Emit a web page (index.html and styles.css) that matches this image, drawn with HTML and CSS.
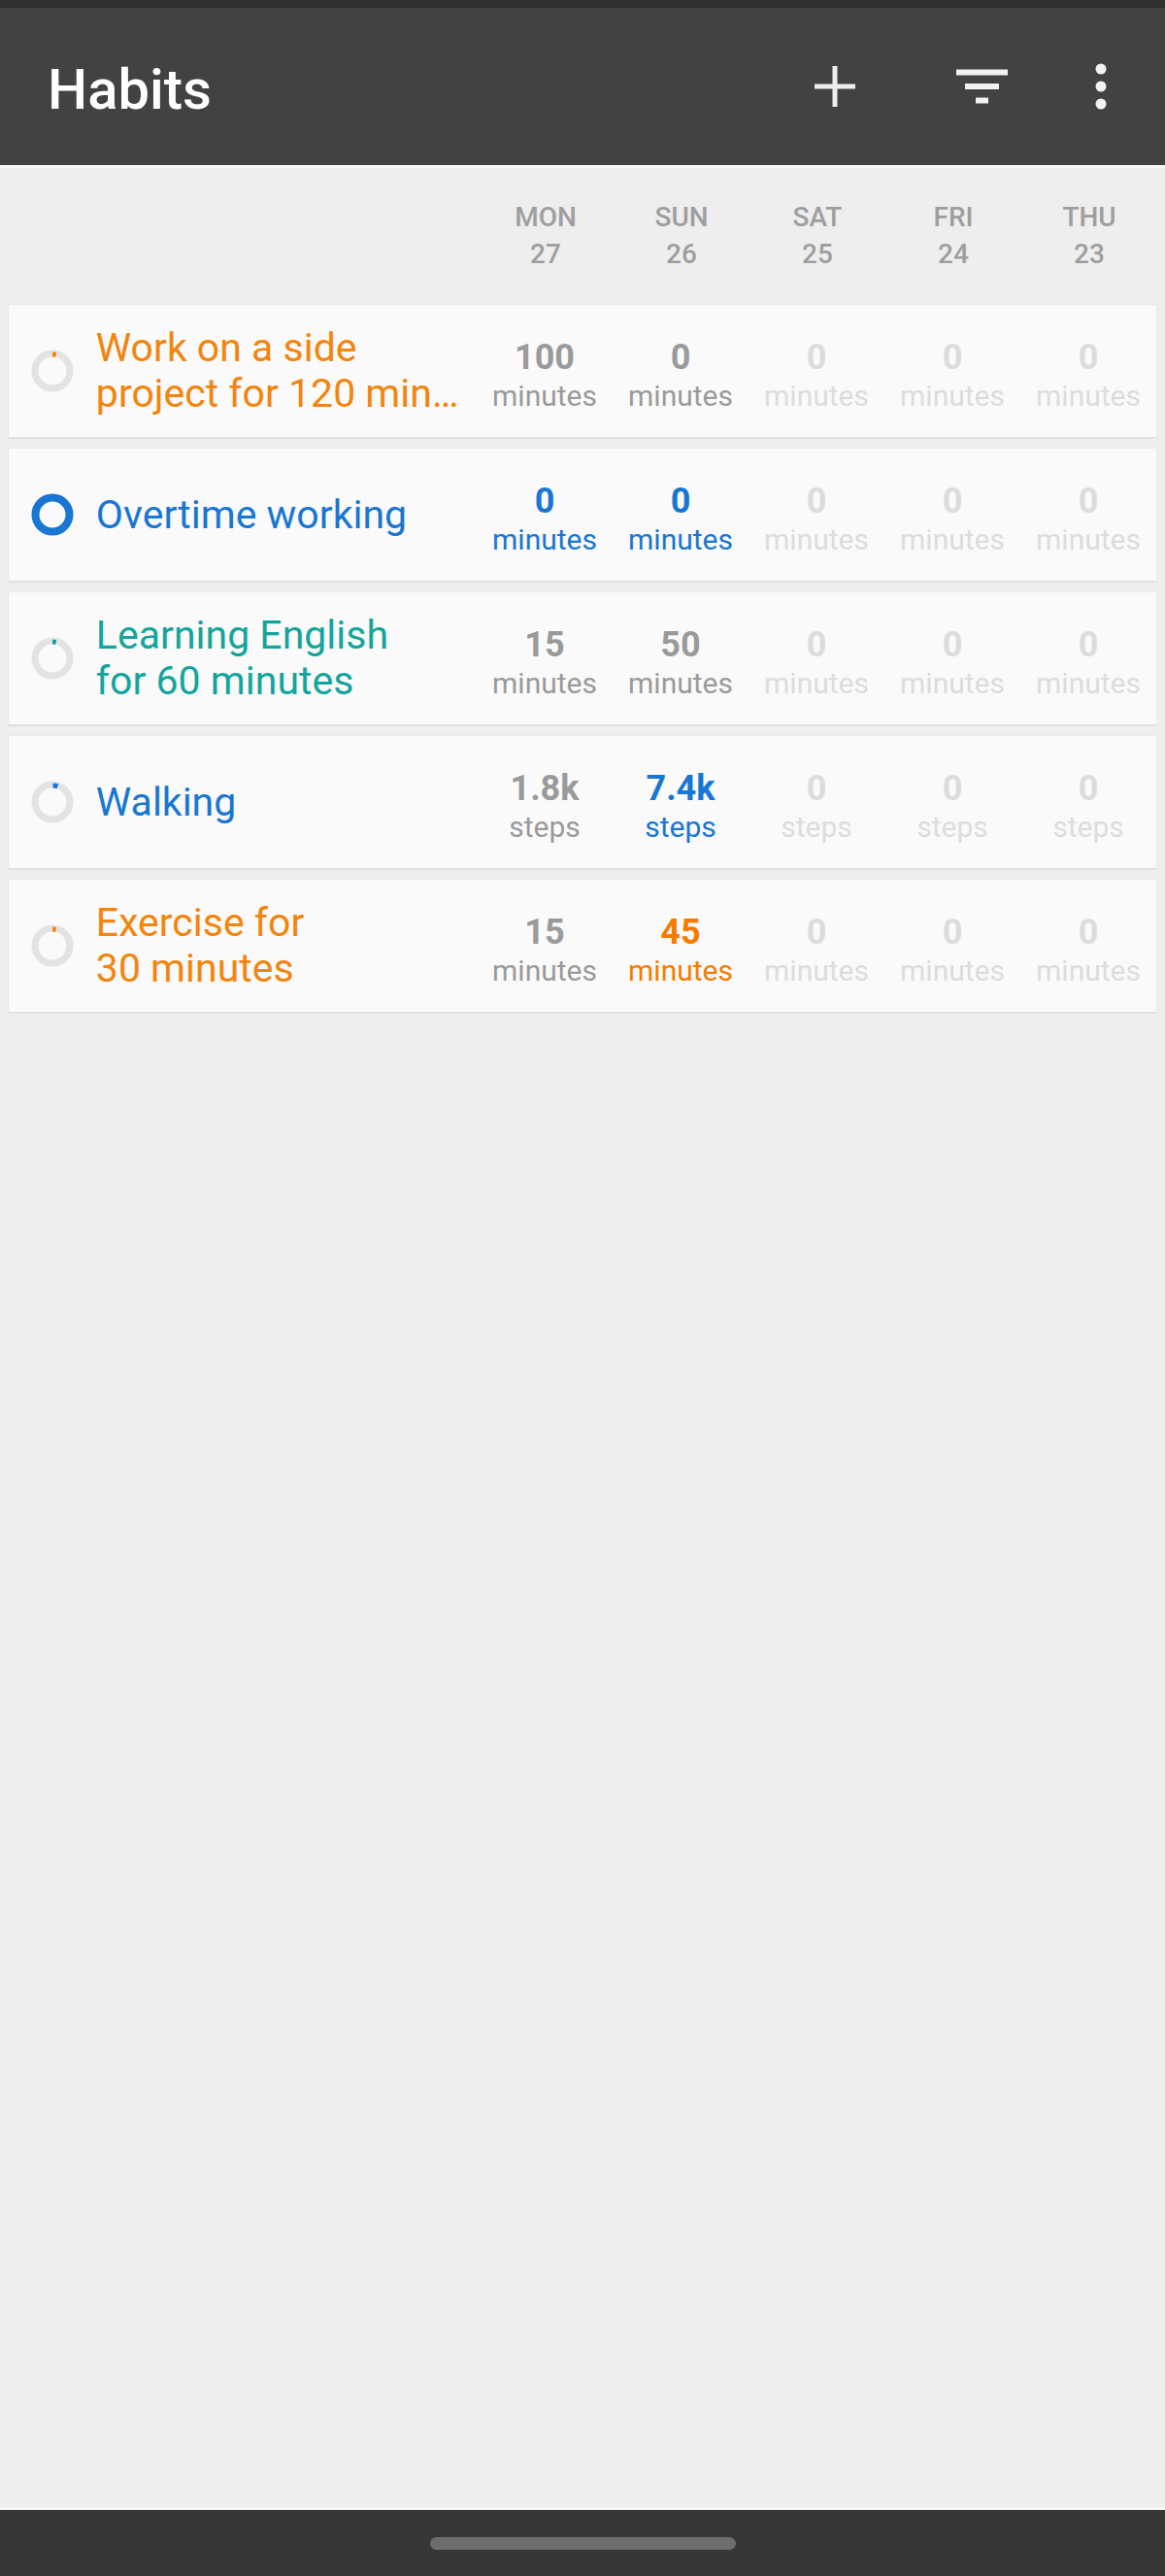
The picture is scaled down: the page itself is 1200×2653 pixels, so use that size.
FILE: index.html
```html
<!DOCTYPE html>
<html lang="en">
<head>
<meta charset="utf-8">
<title>Habits</title>
<link rel="stylesheet" href="styles.css">
</head>
<body>
<div class="screen">
  <div class="statusbar"></div>
  <header class="appbar">
    <h1 class="title">Habits</h1>
    <div class="actions">
      <svg class="icon-add" width="44" height="44" viewBox="0 0 44 44"><path d="M22 1V43M1 22H43" stroke="#eeeeee" stroke-width="5" fill="none"/></svg>
      <svg class="icon-filter" width="54" height="36" viewBox="0 0 54 36"><rect x="0" y="0.5" width="53" height="6" fill="#f2f2f2"/><rect x="9" y="15" width="35" height="6" fill="#f2f2f2"/><rect x="20" y="29.5" width="13" height="6" fill="#f2f2f2"/></svg>
      <svg class="icon-more" width="12" height="48" viewBox="0 0 12 48"><circle cx="6" cy="6" r="5.5" fill="#f2f2f2"/><circle cx="6" cy="24" r="5.5" fill="#f2f2f2"/><circle cx="6" cy="42" r="5.5" fill="#f2f2f2"/></svg>
    </div>
  </header>

  <div class="days">
    <div class="day">MON<br>27</div>
    <div class="day">SUN<br>26</div>
    <div class="day">SAT<br>25</div>
    <div class="day">FRI<br>24</div>
    <div class="day">THU<br>23</div>
  </div>

  <main class="list">
    <div class="habit">
      <div class="ring-wrap">
        <svg width="44" height="44" viewBox="0 0 44 44"><circle cx="22" cy="22" r="18" class="ring-bg"/><path d="M22.2 5 A17 17 0 0 1 25.6 5.4" class="arc orange-stroke"/></svg>
      </div>
      <div class="name orange">Work on a side<br>project for 120 min…</div>
      <div class="cells">
        <div class="cell"><span class="val">100</span><span class="unit">minutes</span></div>
        <div class="cell"><span class="val">0</span><span class="unit">minutes</span></div>
        <div class="cell faded"><span class="val">0</span><span class="unit">minutes</span></div>
        <div class="cell faded"><span class="val">0</span><span class="unit">minutes</span></div>
        <div class="cell faded"><span class="val">0</span><span class="unit">minutes</span></div>
      </div>
    </div>

    <div class="habit">
      <div class="ring-wrap">
        <svg width="44" height="44" viewBox="0 0 44 44"><circle cx="22" cy="22" r="17.5" class="ring-full"/></svg>
      </div>
      <div class="name blue">Overtime working</div>
      <div class="cells">
        <div class="cell blue"><span class="val">0</span><span class="unit">minutes</span></div>
        <div class="cell blue"><span class="val">0</span><span class="unit">minutes</span></div>
        <div class="cell faded"><span class="val">0</span><span class="unit">minutes</span></div>
        <div class="cell faded"><span class="val">0</span><span class="unit">minutes</span></div>
        <div class="cell faded"><span class="val">0</span><span class="unit">minutes</span></div>
      </div>
    </div>

    <div class="habit">
      <div class="ring-wrap">
        <svg width="44" height="44" viewBox="0 0 44 44"><circle cx="22" cy="22" r="18" class="ring-bg"/><path d="M22.2 5 A17 17 0 0 1 25.6 5.4" class="arc teal-stroke"/></svg>
      </div>
      <div class="name teal">Learning English<br>for 60 minutes</div>
      <div class="cells">
        <div class="cell"><span class="val">15</span><span class="unit">minutes</span></div>
        <div class="cell"><span class="val">50</span><span class="unit">minutes</span></div>
        <div class="cell faded"><span class="val">0</span><span class="unit">minutes</span></div>
        <div class="cell faded"><span class="val">0</span><span class="unit">minutes</span></div>
        <div class="cell faded"><span class="val">0</span><span class="unit">minutes</span></div>
      </div>
    </div>

    <div class="habit">
      <div class="ring-wrap">
        <svg width="44" height="44" viewBox="0 0 44 44"><circle cx="22" cy="22" r="18" class="ring-bg"/><path d="M22.6 5 A17 17 0 0 1 27.4 5.9" class="arc blue-stroke"/></svg>
      </div>
      <div class="name blue">Walking</div>
      <div class="cells">
        <div class="cell"><span class="val">1.8k</span><span class="unit">steps</span></div>
        <div class="cell blue"><span class="val">7.4k</span><span class="unit">steps</span></div>
        <div class="cell faded"><span class="val">0</span><span class="unit">steps</span></div>
        <div class="cell faded"><span class="val">0</span><span class="unit">steps</span></div>
        <div class="cell faded"><span class="val">0</span><span class="unit">steps</span></div>
      </div>
    </div>

    <div class="habit">
      <div class="ring-wrap">
        <svg width="44" height="44" viewBox="0 0 44 44"><circle cx="22" cy="22" r="18" class="ring-bg"/><path d="M22.2 5 A17 17 0 0 1 25.6 5.4" class="arc orange-stroke"/></svg>
      </div>
      <div class="name orange">Exercise for<br>30 minutes</div>
      <div class="cells">
        <div class="cell"><span class="val">15</span><span class="unit">minutes</span></div>
        <div class="cell orange"><span class="val">45</span><span class="unit">minutes</span></div>
        <div class="cell faded"><span class="val">0</span><span class="unit">minutes</span></div>
        <div class="cell faded"><span class="val">0</span><span class="unit">minutes</span></div>
        <div class="cell faded"><span class="val">0</span><span class="unit">minutes</span></div>
      </div>
    </div>
  </main>

  <footer class="navbar"><div class="pill"></div></footer>
</div>
</body>
</html>
```

FILE: styles.css
```css
* { box-sizing: border-box; }

html, body {
  margin: 0;
  padding: 0;
}

body {
  background: #eeeeee;
  font-family: Roboto, "Noto Sans", "Liberation Sans", sans-serif;
}

.screen {
  width: 1200px;
  height: 2653px;
  display: flex;
  flex-direction: column;
}

.statusbar {
  height: 8px;
  background: #303030;
  flex: none;
}

.appbar {
  flex: none;
  height: 165px;
  background: #424242;
  border-bottom: 3px solid #f7f7f7;
  display: flex;
  align-items: center;
  padding-left: 49px;
}

.title {
  flex: 1;
  margin: 0;
  padding-top: 6px;
  font-size: 58px;
  line-height: 58px;
  font-weight: 500;
  color: #ffffff;
}

.actions {
  display: flex;
  align-items: center;
  padding-right: 60px;
}

.icon-filter { margin-left: 103px; }
.icon-more { margin-left: 89px; }

.days {
  flex: none;
  height: 140px;
  display: flex;
  justify-content: flex-end;
  align-items: center;
  padding-right: 8px;
}

.day {
  width: 140px;
  text-align: center;
  font-size: 28px;
  line-height: 38px;
  font-weight: 500;
  color: #9e9e9e;
}

.list {
  flex: 1;
}

.habit {
  height: 139px;
  margin: 0 8px 9px;
  background: #fafafa;
  display: flex;
  align-items: center;
  border: 1px solid #e9e9e9;
  border-bottom: 2px solid #e0e0e0;
}

.ring-wrap {
  width: 90px;
  padding-left: 23px;
  display: flex;
  align-items: center;
}

.ring-wrap svg { display: block; }

.ring-bg {
  fill: none;
  stroke: #e3e3e3;
  stroke-width: 7;
}

.ring-full {
  fill: none;
  stroke: #1976d2;
  stroke-width: 8;
}

.arc {
  fill: none;
  stroke-width: 5;
}

.orange-stroke { stroke: #f57c00; }
.teal-stroke { stroke: #00a096; }
.blue-stroke { stroke: #1976d2; }

.name {
  width: 393px;
  font-size: 41px;
  line-height: 47px;
  white-space: nowrap;
}

.orange { color: #f3850e; }
.blue { color: #1976d2; }
.teal { color: #13a59c; }

.cells {
  display: flex;
  height: 100%;
}

.cell {
  width: 140px;
  height: 100%;
  padding-top: 12px;
  display: flex;
  flex-direction: column;
  align-items: center;
  justify-content: center;
  color: #9a9a9a;
}

.cell.blue { color: #1976d2; }
.cell.orange { color: #f57c00; }
.cell.faded { color: #dcdcdc; }

.val {
  font-size: 36px;
  line-height: 40px;
  font-weight: 700;
}

.unit {
  font-size: 30px;
  line-height: 40px;
}

.navbar {
  flex: none;
  height: 71px;
  background: #363636;
  border-top: 3px solid #f8f8f8;
  display: flex;
  justify-content: center;
  align-items: flex-start;
}

.pill {
  width: 315px;
  height: 13px;
  margin-top: 28px;
  border-radius: 7px;
  background: #6d6d6d;
}
```
